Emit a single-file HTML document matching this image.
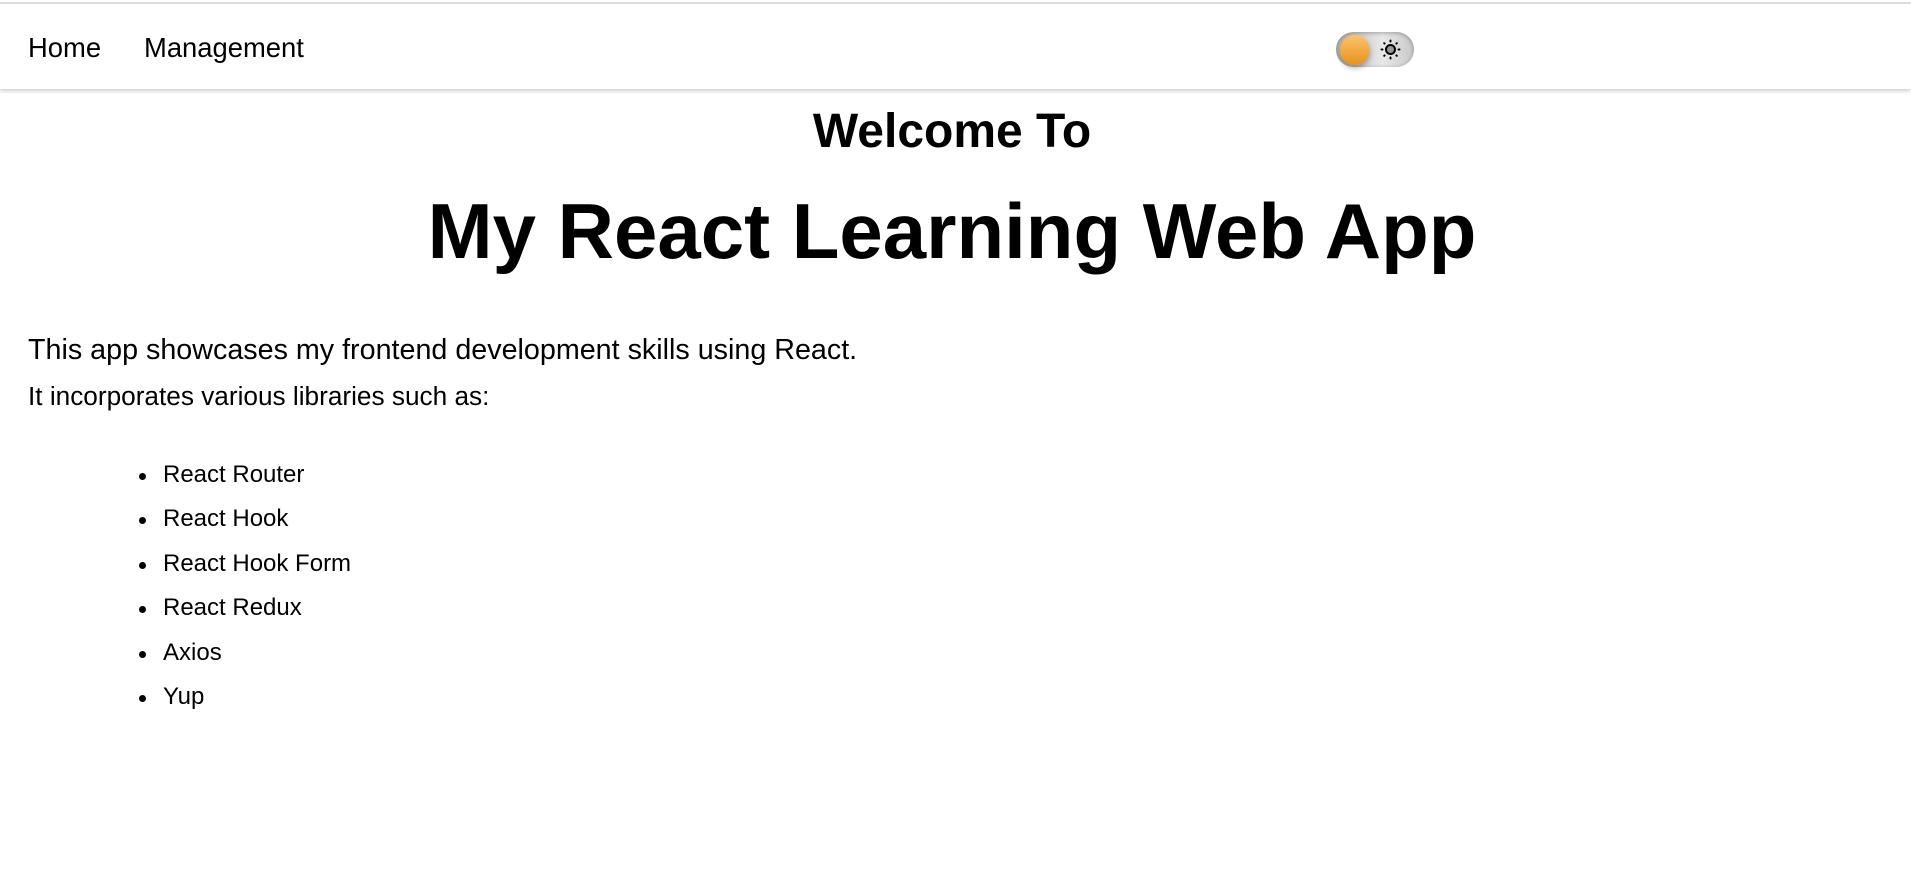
<!DOCTYPE html>
<html><head><style>
html,body{margin:0;padding:0;width:1911px;height:878px;overflow:hidden;background:#fff;font-family:"Liberation Sans",Arial,sans-serif;color:#000}
.a{position:absolute;line-height:1;white-space:nowrap;margin:0}
.topline{position:absolute;left:0;top:2px;width:1911px;height:2px;background:#e0e0e0}
.hdr{position:absolute;left:0;top:4px;width:1911px;height:85px;background:#fff;box-shadow:0 2px 4px rgba(0,0,0,0.2)}
.tog{position:absolute;left:1336px;top:32px;width:78px;height:35px;border-radius:18px;background:linear-gradient(90deg,#b8b8b8,#e8e8e8 60%,#c8c8c8);box-shadow:inset 0 1px 4px rgba(0,0,0,0.3)}
.knob{position:absolute;left:4px;top:2.5px;width:30px;height:30px;border-radius:50%;background:linear-gradient(180deg,#fbc36a,#e8931c);box-shadow:0 3px 6px rgba(0,0,0,0.3)}
.bul{position:absolute;width:7px;height:7px;border-radius:50%;background:#000}
</style></head><body>
<div class="topline"></div>
<div class="hdr"></div>
<div class="a" style="left:28px;top:34px;font-size:27.4px">Home</div>
<div class="a" style="left:144px;top:34px;font-size:27.4px">Management</div>
<div class="tog"><div class="knob"></div>
<svg style="position:absolute;left:44px;top:7px" width="21" height="21" viewBox="0 0 21 21">
<circle cx="10.5" cy="10.5" r="4.5" fill="#999" stroke="#000" stroke-width="2"/>
<g stroke="#000" stroke-width="2" stroke-linecap="round">
<line x1="10.5" y1="1.5" x2="10.5" y2="2.5"/><line x1="10.5" y1="18.5" x2="10.5" y2="19.5"/>
<line x1="1.5" y1="10.5" x2="2.5" y2="10.5"/><line x1="18.5" y1="10.5" x2="19.5" y2="10.5"/>
<line x1="4.2" y1="4.2" x2="4.6" y2="4.6"/><line x1="16.4" y1="16.4" x2="16.8" y2="16.8"/>
<line x1="4.2" y1="16.8" x2="4.6" y2="16.4"/><line x1="16.4" y1="4.6" x2="16.8" y2="4.2"/>
</g></svg></div>
<div class="a" style="left:0;width:1904px;text-align:center;top:108px;font-size:48px;font-weight:bold">Welcome To</div>
<div class="a" style="left:0;width:1904px;text-align:center;top:192px;font-size:78px;font-weight:bold">My React Learning Web App</div>
<div class="a" style="left:28px;top:336px;font-size:28.7px">This app showcases my frontend development skills using React.</div>
<div class="a" style="left:28px;top:383px;font-size:26.2px">It incorporates various libraries such as:</div>
<div class="bul" style="left:139px;top:473px"></div><div class="a" style="left:163px;top:463px;font-size:24px">React Router</div>
<div class="bul" style="left:139px;top:517px"></div><div class="a" style="left:163px;top:507px;font-size:24px">React Hook</div>
<div class="bul" style="left:139px;top:562px"></div><div class="a" style="left:163px;top:552px;font-size:24px">React Hook Form</div>
<div class="bul" style="left:139px;top:606px"></div><div class="a" style="left:163px;top:596px;font-size:24px">React Redux</div>
<div class="bul" style="left:139px;top:651px"></div><div class="a" style="left:163px;top:641px;font-size:24px">Axios</div>
<div class="bul" style="left:139px;top:695px"></div><div class="a" style="left:163px;top:685px;font-size:24px">Yup</div>
</body></html>
